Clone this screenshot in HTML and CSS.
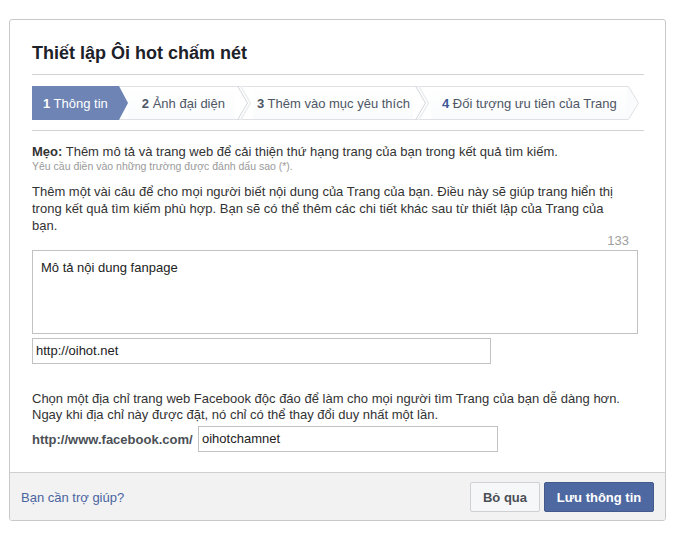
FILE: index.html
```html
<!DOCTYPE html>
<html lang="vi">
<head>
<meta charset="utf-8">
<title>Thiết lập Ôi hot chấm nét</title>
<link rel="stylesheet" href="styles.css">
</head>
<body>
<div class="dialog">
  <div class="content">
    <h1 class="title">Thiết lập Ôi hot chấm nét</h1>
    <div class="steps">
      <div class="step active">
        <span class="label"><b>1</b> Thông tin</span>
        <svg class="chev" width="9" height="34" viewBox="0 0 9 34"><line x1="0" y1="0.5" x2="9" y2="0.5" stroke="#dfe1e5"/><line x1="0" y1="33.5" x2="9" y2="33.5" stroke="#dfe1e5"/><polygon points="0,0 9,17 0,34" fill="#6d84b4"/></svg>
      </div>
      <div class="step s2">
        <span class="label"><b>2</b> Ảnh đại diện</span>
        <svg class="chev" width="18" height="34" viewBox="0 0 18 34"><line x1="0" y1="0.5" x2="18" y2="0.5" stroke="#dfe1e5"/><line x1="0" y1="33.5" x2="18" y2="33.5" stroke="#dfe1e5"/><path d="M2.5 0 L12.5 17 L2.5 34" fill="none" stroke="#d2d6dc"/><path d="M5.5 0 L15.5 17 L5.5 34" fill="none" stroke="#eceef1" stroke-width="1.5"/></svg>
      </div>
      <div class="step s3">
        <span class="label"><b>3</b> Thêm vào mục yêu thích</span>
        <svg class="chev" width="18" height="34" viewBox="0 0 18 34"><line x1="0" y1="0.5" x2="18" y2="0.5" stroke="#dfe1e5"/><line x1="0" y1="33.5" x2="18" y2="33.5" stroke="#dfe1e5"/><path d="M2.5 0 L12.5 17 L2.5 34" fill="none" stroke="#d2d6dc"/><path d="M5.5 0 L15.5 17 L5.5 34" fill="none" stroke="#eceef1" stroke-width="1.5"/></svg>
      </div>
      <div class="step s4">
        <span class="label"><b class="blue">4</b> Đối tượng ưu tiên của Trang</span>
        <svg class="chev" width="13" height="34" viewBox="0 0 13 34"><path d="M0 0.5 L1.5 0.5 L11.5 17 L1.5 33.5 L0 33.5" fill="#fafbfc" stroke="#dfe1e5"/></svg>
      </div>
    </div>
    <div class="sep"></div>
    <p class="tip"><b>Mẹo:</b> Thêm mô tả và trang web để cải thiện thứ hạng trang của bạn trong kết quả tìm kiếm.</p>
    <p class="hint">Yêu cầu điền vào những trường được đánh dấu sao (*).</p>
    <p class="desc">Thêm một vài câu để cho mọi người biết nội dung của Trang của bạn. Điều này sẽ giúp trang hiển thị trong kết quả tìm kiếm phù hợp. Bạn sẽ có thể thêm các chi tiết khác sau từ thiết lập của Trang của bạn.</p>
    <div class="counter">133</div>
    <div class="textarea">Mô tả nội dung fanpage</div>
    <div class="input website">http://oihot.net</div>
    <p class="desc2">Chọn một địa chỉ trang web Facebook độc đáo để làm cho mọi người tìm Trang của bạn dễ dàng hơn. Ngay khi địa chỉ này được đặt, nó chỉ có thể thay đổi duy nhất một lần.</p>
    <div class="url-row">
      <span class="url-label">http://www.facebook.com/</span>
      <div class="input username">oihotchamnet</div>
    </div>
  </div>
  <div class="footer">
    <a class="help">Bạn cần trợ giúp?</a>
    <div class="buttons">
      <span class="btn btn-skip">Bỏ qua</span>
      <span class="btn btn-save">Lưu thông tin</span>
    </div>
  </div>
</div>
</body>
</html>
```

FILE: styles.css
```css
* { box-sizing: border-box; }
html, body { margin: 0; padding: 0; background: #fff; }
body {
  font-family: "Liberation Sans", Arial, sans-serif;
  font-size: 13px;
  color: #333;
}
.dialog {
  margin: 19px 0 0 9px;
  width: 657px;
  border: 1px solid #c9c9c9;
  border-radius: 3px;
  background: #fff;
  overflow: hidden;
}
.content {
  padding: 0 21px 20px 22px;
}
.title {
  margin: 0;
  padding: 22px 0 10px;
  font-size: 18px;
  line-height: 22px;
  font-weight: bold;
  color: #1d2129;
  border-bottom: 1px solid #d3d3d3;
}
.steps {
  margin-top: 11px;
  display: flex;
  height: 34px;
}
.step {
  display: flex;
  height: 34px;
}
.step .label {
  display: block;
  height: 34px;
  line-height: 34px;
  font-size: 13px;
  color: #4e5665;
  border-top: 1px solid #dfe1e5;
  border-bottom: 1px solid #dfe1e5;
  background: linear-gradient(#fff, #fafbfc);
  white-space: nowrap;
}
.step .label b { color: #4e5665; }
.step .label b.blue { color: #3b5998; }
.step.active .label {
  background: #6d84b4;
  border-color: #6d84b4;
  color: #fff;
  padding: 0 11px 0 11px;
}
.step.active .label b { color: #fff; }
.step.s2 .label { padding: 0 10px 0 14px; }
.step.s3 .label { padding: 0 3px 0 4px; }
.step.s4 .label { padding: 0 10px 0 11px; }
.chev { display: block; flex: none; }
.sep {
  margin-top: 10px;
  border-top: 1px solid #d3d3d3;
}
p { margin: 0; }
.tip {
  margin-top: 13px;
  line-height: 15px;
}
.hint {
  margin-top: 1px;
  font-size: 10.5px;
  line-height: 12px;
  color: #9a9a9a;
}
.desc {
  margin-top: 11px;
  width: 594px;
  line-height: 17px;
}
.counter {
  width: 606px;
  text-align: right;
  padding-right: 9px;
  line-height: 14px;
  color: #a0a0a0;
}
.textarea {
  margin-top: 2px;
  width: 606px;
  height: 84px;
  border: 1px solid #c2c2c2;
  padding: 9px 8px;
  line-height: 15px;
  color: #222;
}
.input {
  height: 26px;
  border: 1px solid #c2c2c2;
  padding: 0 3px;
  line-height: 24px;
  color: #222;
}
.website {
  margin-top: 4px;
  width: 459px;
}
.desc2 {
  margin-top: 27px;
  line-height: 16px;
}
.url-row {
  margin-top: 3px;
  display: flex;
  align-items: center;
}
.url-label {
  width: 166px;
  font-weight: bold;
  color: #4b4f56;
  white-space: nowrap;
}
.username { width: 300px; }
.footer {
  display: flex;
  justify-content: space-between;
  align-items: center;
  padding: 9px 11px 8px 11px;
  background: #f2f2f2;
  border-top: 1px solid #d0d0d0;
}
.help {
  font-size: 13px;
  color: #4a64a0;
}
.buttons { display: flex; gap: 4px; }
.btn {
  display: flex;
  align-items: center;
  justify-content: center;
  height: 30px;
  font-size: 13px;
  font-weight: bold;
  border-radius: 2px;
}
.btn-skip {
  width: 70px;
  background: #f6f7f9;
  border: 1px solid #ced0d4;
  color: #4b4f56;
}
.btn-save {
  width: 110px;
  background: #4e69a2;
  border: 1px solid #435a8b;
  color: #fff;
}
```
